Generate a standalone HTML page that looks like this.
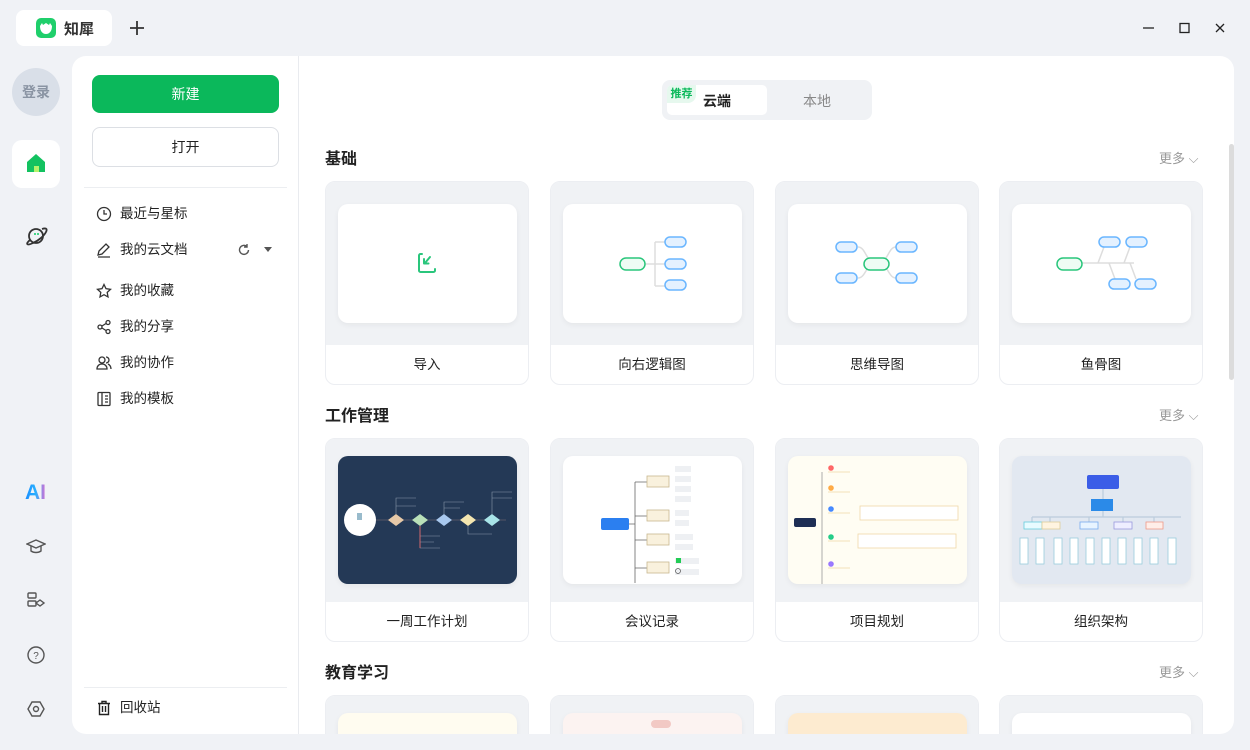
<!DOCTYPE html>
<html style="width:1250px;height:750px;overflow:hidden"><head><meta charset="utf-8">
<style>
*{margin:0;padding:0;box-sizing:border-box}
body{width:1250px;height:750px;overflow:hidden;background:#f0f2f6;font-family:"Liberation Sans","Noto Sans CJK SC",sans-serif;color:#222;position:relative}
.abs{position:absolute}
.tab{left:16px;top:10px;width:96px;height:36px;background:#fff;border-radius:8px}
.main{left:72px;top:56px;width:1162px;height:678px;background:#fff;border-radius:14px;overflow:hidden}
.side{left:0;top:0;width:227px;height:678px;border-right:1px solid #e9ebef}
.btn1{left:20px;top:19px;width:187px;height:38px;background:#0bb85b;border-radius:8px;color:#fff;font-size:14px;text-align:center;line-height:38px}
.btn2{left:20px;top:71px;width:187px;height:40px;border:1px solid #dcdfe4;border-radius:8px;font-size:14px;text-align:center;line-height:38px}
.menu{left:24px;font-size:13.5px;color:#222;height:20px;line-height:20px}
.menu svg{position:absolute;left:0;top:2px}
.menu span{position:absolute;left:24px;top:0;white-space:nowrap}
.h{font-size:16px;font-weight:bold;color:#222}
.more{font-size:13px;color:#999}
.card{width:204px;height:204px;border:1px solid #eceef2;border-radius:10px;overflow:hidden;background:#fff}
.card .top{position:absolute;left:0;top:0;width:100%;height:163px;background:#f0f2f5}
.card .pv{position:absolute;left:12px;width:179px;background:#fff;border-radius:10px;box-shadow:0 2px 6px rgba(0,0,0,.05);overflow:hidden}
.card .lb{position:absolute;left:0;top:163px;width:100%;height:40px;text-align:center;line-height:40px;font-size:13.5px;color:#222}
.clip{left:300px;top:690px;width:934px;height:44px;overflow:hidden}
</style></head><body>

<div class="abs tab">
 <svg class="abs" style="left:20px;top:8px" width="20" height="20" viewBox="0 0 20 20"><rect width="20" height="20" rx="5" fill="#1fcf6b"/><path d="M4 8c0 5 2.5 8 6 8s6-3 6-8l-2-3-1 2-3-2-3 2-1-2z" fill="#fff"/></svg>
 <div class="abs" style="left:48px;top:8px;font-size:15px;font-weight:bold;color:#333">知犀</div>
</div>
<svg class="abs" style="left:129px;top:20px" width="16" height="16"><path d="M8 1v14M1 8h14" stroke="#333" stroke-width="1.8"/></svg>
<svg class="abs" style="left:1140px;top:20px" width="90" height="16"><path d="M3 8h11" stroke="#222" stroke-width="1.3"/><rect x="40" y="3.5" width="9" height="9" fill="none" stroke="#222" stroke-width="1.3"/><path d="M76 4l8 8M84 4l-8 8" stroke="#222" stroke-width="1.3"/></svg>

<div class="abs" style="left:12px;top:68px;width:48px;height:48px;border-radius:24px;background:#d9dfe8;color:#8a94a3;font-size:14px;text-align:center;line-height:48px;font-weight:bold">登录</div>
<div class="abs" style="left:12px;top:140px;width:48px;height:48px;border-radius:10px;background:#fff"></div>
<svg class="abs" style="left:25px;top:152px" width="22" height="22" viewBox="0 0 22 22"><path d="M2 10L11 2l9 8v10H2z" fill="#13c260"/><rect x="9" y="14" width="5" height="6" fill="#b4f36a"/></svg>
<svg class="abs" style="left:24px;top:224px" width="24" height="24" viewBox="0 0 24 24"><circle cx="12" cy="12" r="7" fill="none" stroke="#333" stroke-width="1.8"/><path d="M6 16C1 20 3 22 9 19c5-2 11-7 13-11 2-4-1-4-4-3" fill="none" stroke="#333" stroke-width="1.8"/><circle cx="11" cy="10" r="1" fill="#1c6"/><circle cx="14" cy="10" r="1" fill="#1c6"/></svg>
<div class="abs" style="left:25px;top:481px;font-size:21px;font-weight:bold;background:linear-gradient(90deg,#1a8cff,#28b0ff 50%,#e06bd0);-webkit-background-clip:text;color:transparent">AI</div>
<svg class="abs" style="left:26px;top:537px" width="20" height="20" viewBox="0 0 20 20" fill="none" stroke="#555" stroke-width="1.4"><path d="M1 7l9-4 9 4-9 4z"/><path d="M5 9v5c3 2 7 2 10 0V9"/></svg>
<svg class="abs" style="left:26px;top:591px" width="20" height="20" viewBox="0 0 20 20" fill="none" stroke="#555" stroke-width="1.4"><rect x="2" y="2" width="8" height="5" rx="1"/><rect x="2" y="10" width="8" height="5" rx="1"/><path d="M10 12l4-3 4 3-4 3z"/></svg>
<svg class="abs" style="left:26px;top:645px" width="20" height="20" viewBox="0 0 20 20"><circle cx="10" cy="10" r="8" fill="none" stroke="#555" stroke-width="1.4"/><text x="10" y="14" font-size="10" text-anchor="middle" fill="#555" font-family="Liberation Sans">?</text></svg>
<svg class="abs" style="left:26px;top:699px" width="20" height="20" viewBox="0 0 20 20" fill="none" stroke="#555" stroke-width="1.4"><path d="M6 3h8l4 7-4 7H6L2 10z"/><circle cx="10" cy="10" r="2.5"/></svg>

<div class="abs main">
 <div class="abs side">
  <div class="abs btn1">新建</div>
  <div class="abs btn2">打开</div>
  <div class="abs" style="left:12px;top:131px;width:203px;height:1px;background:#eceef1"></div>
  <div class="abs menu" style="top:148px"><svg width="16" height="16" viewBox="0 0 16 16" fill="none" stroke="#333" stroke-width="1.3"><circle cx="8" cy="8" r="6.5"/><path d="M8 4v4h3"/></svg><span>最近与星标</span></div>
  <div class="abs menu" style="top:184px"><svg width="16" height="16" viewBox="0 0 16 16" fill="none" stroke="#333" stroke-width="1.3"><path d="M2 13l1-4 7-7 3 3-7 7zM2 15h12"/></svg><span>我的云文档</span></div>
  <svg class="abs" style="left:165px;top:187px" width="14" height="14" viewBox="0 0 14 14" fill="none" stroke="#555" stroke-width="1.4"><path d="M11.5 7A4.5 4.5 0 1 1 10 3.5M10 1v3h-3"/></svg>
  <svg class="abs" style="left:192px;top:191px" width="8" height="6"><path d="M0 0h8L4 5z" fill="#555"/></svg>
  <div class="abs menu" style="top:225px"><svg width="16" height="16" viewBox="0 0 16 16" fill="none" stroke="#333" stroke-width="1.3"><path d="M8 1.5l2 4.2 4.5.6-3.3 3.1.8 4.5L8 11.7 4 13.9l.8-4.5-3.3-3.1 4.5-.6z"/></svg><span>我的收藏</span></div>
  <div class="abs menu" style="top:261px"><svg width="16" height="16" viewBox="0 0 16 16" fill="none" stroke="#333" stroke-width="1.3"><circle cx="4" cy="8" r="2"/><circle cx="12" cy="3.5" r="2"/><circle cx="12" cy="12.5" r="2"/><path d="M6 7l4-2.5M6 9l4 2.5"/></svg><span>我的分享</span></div>
  <div class="abs menu" style="top:297px"><svg width="16" height="16" viewBox="0 0 16 16" fill="none" stroke="#333" stroke-width="1.3"><circle cx="6" cy="5" r="3"/><path d="M1 14c0-3 2-5 5-5s5 2 5 5zM10 2a3 3 0 0 1 0 6M12 9c2 1 3 3 3 5"/></svg><span>我的协作</span></div>
  <div class="abs menu" style="top:333px"><svg width="16" height="16" viewBox="0 0 16 16" fill="none" stroke="#333" stroke-width="1.3"><rect x="2" y="1.5" width="12" height="13" rx="1"/><path d="M6 1.5v13M9 5h3M9 8h3M9 11h3"/></svg><span>我的模板</span></div>
  <div class="abs" style="left:12px;top:631px;width:203px;height:1px;background:#eceef1"></div>
  <div class="abs menu" style="top:642px"><svg width="16" height="16" viewBox="0 0 16 16" fill="none" stroke="#222" stroke-width="1.4"><path d="M2 3.5h12M6 3.5V1.5h4v2M3.5 3.5v11h9v-11M6.5 6v6M9.5 6v6"/></svg><span>回收站</span></div>
 </div>
</div>

<div class="abs" style="left:662px;top:80px;width:210px;height:40px;background:#f0f2f5;border-radius:8px"></div>
<div class="abs" style="left:667px;top:85px;width:100px;height:30px;background:#fff;border-radius:5px"></div>
<div class="abs" style="left:667px;top:85px;width:29px;height:18px;background:#e6f8ee;border-radius:5px 0 8px 0;color:#0bb85b;font-size:11px;font-weight:bold;text-align:center;line-height:18px">推荐</div>
<div class="abs" style="left:703px;top:91px;font-size:14px;font-weight:bold">云端</div>
<div class="abs" style="left:803px;top:91px;font-size:14px;color:#888">本地</div>

<div class="abs h" style="left:325px;top:145px">基础</div>
<div class="abs more" style="left:1159px;top:148px">更多 ⌵</div>
<div class="abs h" style="left:325px;top:402px">工作管理</div>
<div class="abs more" style="left:1159px;top:405px">更多 ⌵</div>
<div class="abs h" style="left:325px;top:659px">教育学习</div>
<div class="abs more" style="left:1159px;top:662px">更多 ⌵</div>
<div class="abs" style="left:1229px;top:144px;width:5px;height:236px;background:#dcdcdc;border-radius:3px"></div>

<div class="abs card" style="left:325px;top:181px"><div class="top"></div>
 <div class="pv" style="top:22px;height:119px"><svg width="179" height="119" fill="none" stroke="#2ac67c" stroke-width="2" stroke-linecap="round" stroke-linejoin="round"><path d="M84 50h-1.5a1.5 1.5 0 0 0-1.5 1.5v15a1.5 1.5 0 0 0 1.5 1.5h13a1.5 1.5 0 0 0 1.5-1.5V65"/><path d="M92 53l-5 6M86 55v4.5h4.5"/></svg></div>
 <div class="lb">导入</div></div>
<div class="abs card" style="left:550px;top:181px"><div class="top"></div>
 <div class="pv" style="top:22px;height:119px"><svg width="179" height="119" fill="none" stroke-width="1.5"><path d="M82 60h10M92 38v44M92 38h10M92 60h10M92 82h10" stroke="#ddd"/><rect x="57" y="54" width="25" height="12" rx="6" fill="#eefcf4" stroke="#2ac67c"/><rect x="102" y="33" width="21" height="10" rx="5" fill="#e4f1ff" stroke="#6ab6ff"/><rect x="102" y="55" width="21" height="10" rx="5" fill="#e4f1ff" stroke="#6ab6ff"/><rect x="102" y="76" width="21" height="10" rx="5" fill="#e4f1ff" stroke="#6ab6ff"/></svg></div>
 <div class="lb">向右逻辑图</div></div>
<div class="abs card" style="left:775px;top:181px"><div class="top"></div>
 <div class="pv" style="top:22px;height:119px"><svg width="179" height="119" fill="none" stroke-width="1.5"><path d="M70 43c8 0 8 16 18 16M70 74c8 0 8-15 18-15M108 43c-8 0-8 16-18 16M108 74c-8 0-8-15-18-15" stroke="#ddd"/><rect x="76" y="54" width="25" height="12" rx="6" fill="#eefcf4" stroke="#2ac67c"/><rect x="48" y="38" width="21" height="10" rx="5" fill="#e4f1ff" stroke="#6ab6ff"/><rect x="48" y="69" width="21" height="10" rx="5" fill="#e4f1ff" stroke="#6ab6ff"/><rect x="108" y="38" width="21" height="10" rx="5" fill="#e4f1ff" stroke="#6ab6ff"/><rect x="108" y="69" width="21" height="10" rx="5" fill="#e4f1ff" stroke="#6ab6ff"/></svg></div>
 <div class="lb">思维导图</div></div>
<div class="abs card" style="left:999px;top:181px"><div class="top"></div>
 <div class="pv" style="top:22px;height:119px"><svg width="179" height="119" fill="none" stroke-width="1.5"><path d="M70 59h52M92 43l-6 16M118 43l-6 16M97 59l6 16M118 59l6 16" stroke="#ddd"/><rect x="45" y="54" width="25" height="12" rx="6" fill="#eefcf4" stroke="#2ac67c"/><rect x="87" y="33" width="21" height="10" rx="5" fill="#e4f1ff" stroke="#6ab6ff"/><rect x="114" y="33" width="21" height="10" rx="5" fill="#e4f1ff" stroke="#6ab6ff"/><rect x="97" y="75" width="21" height="10" rx="5" fill="#e4f1ff" stroke="#6ab6ff"/><rect x="123" y="75" width="21" height="10" rx="5" fill="#e4f1ff" stroke="#6ab6ff"/></svg></div>
 <div class="lb">鱼骨图</div></div>

<div class="abs card" style="left:325px;top:438px"><div class="top"></div>
 <div class="pv" style="top:17px;height:128px;background:#243956"><svg width="179" height="128" fill="none"><circle cx="22" cy="64" r="16" fill="#fff"/><rect x="19" y="57" width="5" height="7" fill="#9bc"/><path d="M38 64h130" stroke="#556" stroke-width="1"/><path d="M50 64l8-6 8 6-8 6z" fill="#e6c9a8"/><path d="M74 64l8-6 8 6-8 6z" fill="#b9e0b8"/><path d="M98 64l8-6 8 6-8 6z" fill="#a8c8ee"/><path d="M122 64l8-6 8 6-8 6z" fill="#f4e6b0"/><path d="M146 64l8-6 8 6-8 6z" fill="#a8e4e8"/><g stroke="#8898aa" stroke-width=".6"><path d="M58 58V42h20M58 50h20M106 58V46h20M106 52h16M154 58V36h20M154 42h20M82 70v22h20M82 80h20M82 86h14M130 70v8h24"/></g><path d="M82 70v22" stroke="#e66" stroke-width=".8"/></svg></div>
 <div class="lb">一周工作计划</div></div>
<div class="abs card" style="left:550px;top:438px"><div class="top"></div>
 <div class="pv" style="top:17px;height:128px"><svg width="179" height="128" fill="none"><rect x="38" y="62" width="28" height="12" rx="2" fill="#2b7ff0"/><path d="M66 68h6M72 26v101M72 26h12M72 60h12M72 84h12M72 112h12" stroke="#666" stroke-width=".8"/><g fill="#f9f1dd" stroke="#c8b890" stroke-width=".8"><rect x="84" y="20" width="22" height="11"/><rect x="84" y="54" width="22" height="11"/><rect x="84" y="78" width="22" height="11"/><rect x="84" y="106" width="22" height="11"/></g><g fill="#eef0f3"><rect x="112" y="10" width="16" height="6"/><rect x="112" y="20" width="16" height="6"/><rect x="112" y="30" width="16" height="6"/><rect x="112" y="40" width="16" height="6"/><rect x="112" y="54" width="14" height="6"/><rect x="112" y="64" width="14" height="6"/><rect x="112" y="78" width="18" height="6"/><rect x="112" y="88" width="18" height="6"/><rect x="112" y="102" width="24" height="6"/><rect x="112" y="113" width="24" height="6"/></g><rect x="113" y="102" width="5" height="5" fill="#2c5"/><circle cx="115" cy="115" r="2.5" stroke="#555" stroke-width=".7"/></svg></div>
 <div class="lb">会议记录</div></div>
<div class="abs card" style="left:775px;top:438px"><div class="top"></div>
 <div class="pv" style="top:17px;height:128px;background:#fffdf3"><svg width="179" height="128" fill="none"><rect x="6" y="62" width="22" height="9" rx="2" fill="#1e2e54"/><path d="M34 16v113" stroke="#999" stroke-width=".8"/><g stroke-width="3"><circle cx="43" cy="12" r="1.3" stroke="#f66"/><circle cx="43" cy="32" r="1.3" stroke="#fa4"/><circle cx="43" cy="53" r="1.3" stroke="#48f"/><circle cx="43" cy="81" r="1.3" stroke="#2c8"/><circle cx="43" cy="108" r="1.3" stroke="#97f"/></g><g stroke="#f0d8a8" stroke-width=".8"><path d="M40 16h22M40 36h22M40 57h22M40 85h22M40 112h22"/><rect x="72" y="50" width="98" height="14" fill="#fff"/><rect x="70" y="78" width="98" height="14" fill="#fff"/></g></svg></div>
 <div class="lb">项目规划</div></div>
<div class="abs card" style="left:999px;top:438px"><div class="top"></div>
 <div class="pv" style="top:17px;height:128px;background:#e2e8f1"><svg width="179" height="128" fill="none"><rect x="75" y="19" width="32" height="14" rx="2" fill="#3b5de7"/><rect x="79" y="43" width="22" height="12" fill="#2b8ae8"/><path d="M91 33v10M91 55v6M20 61h149M20 61v5M38 61v5M77 61v5M111 61v5M142 61v5" stroke="#bcd" stroke-width="1.2"/><g stroke-width=".8"><rect x="12" y="66" width="18" height="7" fill="#e8fbff" stroke="#6cd"/><rect x="30" y="66" width="18" height="7" fill="#fff4e0" stroke="#dc9"/><rect x="68" y="66" width="18" height="7" fill="#e8f4ff" stroke="#7ae"/><rect x="102" y="66" width="18" height="7" fill="#eef" stroke="#99d"/><rect x="134" y="66" width="17" height="7" fill="#ffeee8" stroke="#e98"/></g><g fill="#fff" stroke="#9cd" stroke-width=".8"><rect x="8" y="82" width="8" height="26"/><rect x="24" y="82" width="8" height="26"/><rect x="42" y="82" width="8" height="26"/><rect x="58" y="82" width="8" height="26"/><rect x="74" y="82" width="8" height="26"/><rect x="90" y="82" width="8" height="26"/><rect x="106" y="82" width="8" height="26"/><rect x="122" y="82" width="8" height="26"/><rect x="138" y="82" width="8" height="26"/><rect x="156" y="82" width="8" height="26"/></g></svg></div>
 <div class="lb">组织架构</div></div>

<div class="abs clip">
<div class="abs card" style="left:25px;top:5px"><div class="top"></div><div class="pv" style="top:17px;height:40px;background:#fffcf0"></div></div>
<div class="abs card" style="left:250px;top:5px"><div class="top"></div><div class="pv" style="top:17px;height:40px;background:#fcf3f1"><svg width="179" height="30"><rect x="88" y="7" width="20" height="8" rx="4" fill="#f2c9c4"/></svg></div></div>
<div class="abs card" style="left:475px;top:5px"><div class="top"></div><div class="pv" style="top:17px;height:40px;background:#fdebd0"></div></div>
<div class="abs card" style="left:699px;top:5px"><div class="top"></div><div class="pv" style="top:17px;height:40px"></div></div>
</div>
</body></html>
